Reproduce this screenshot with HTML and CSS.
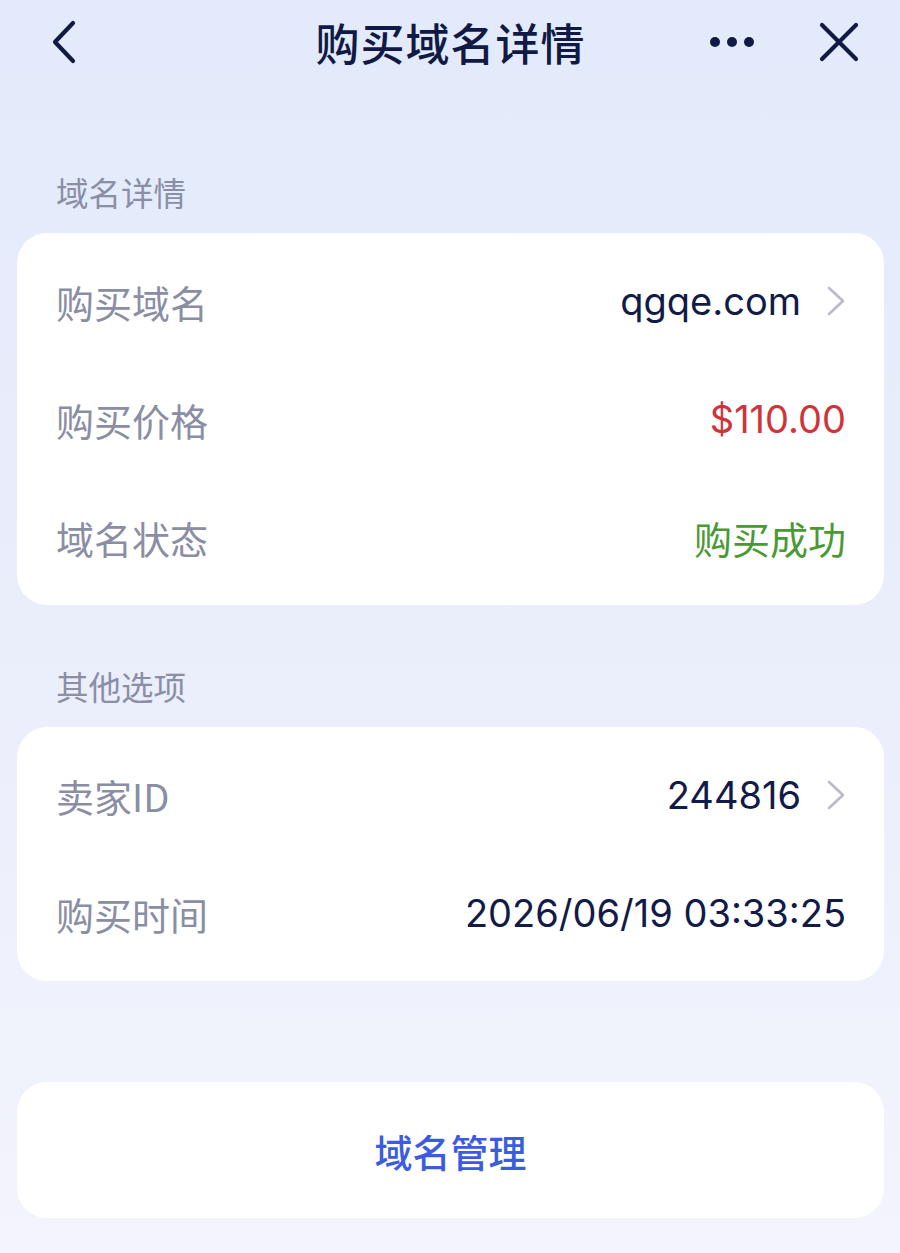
FILE: index.html
```html
<!DOCTYPE html>
<html lang="zh-CN">
<head>
    <meta charset="UTF-8">
    <meta name="viewport" content="width=device-width, initial-scale=1.0">
    <title>购买域名详情</title>
    <link rel="stylesheet" href="styles.css">
</head>
<body>

<div class="page">

    <div class="nav-bar">
        <span class="nav-btn back">
            <svg width="30" height="44" viewBox="0 0 30 44"><path d="M25 3 L7 22 L25 41" fill="none" stroke="#111a44" stroke-width="4.2" stroke-linecap="round" stroke-linejoin="round"/></svg>
        </span>
        <h1 class="nav-title">购买域名详情</h1>
        <div class="nav-actions">
            <span class="nav-btn more">
                <svg width="46" height="12" viewBox="0 0 46 12"><circle cx="6" cy="6" r="5" fill="#111a44"/><circle cx="23" cy="6" r="5" fill="#111a44"/><circle cx="40" cy="6" r="5" fill="#111a44"/></svg>
            </span>
            <span class="nav-btn close">
                <svg width="40" height="40" viewBox="0 0 40 40"><path d="M3 3 L37 37 M37 3 L3 37" fill="none" stroke="#111a44" stroke-width="4.2" stroke-linecap="round"/></svg>
            </span>
        </div>
    </div>

    <div class="section-title">域名详情</div>
    <div class="card">
        <div class="row">
            <span class="label">购买域名</span>
            <span class="value">qgqe.com
                <svg class="arrow" width="20" height="30" viewBox="0 0 20 30"><path d="M3 2 L17 15 L3 28" fill="none" stroke="#b9bcc8" stroke-width="2.6" stroke-linecap="round" stroke-linejoin="round"/></svg>
            </span>
        </div>
        <div class="row">
            <span class="label">购买价格</span>
            <span class="value price">$110.00</span>
        </div>
        <div class="row">
            <span class="label">域名状态</span>
            <span class="value status">购买成功</span>
        </div>
    </div>

    <div class="section-title">其他选项</div>
    <div class="card">
        <div class="row">
            <span class="label">卖家ID</span>
            <span class="value">244816
                <svg class="arrow" width="20" height="30" viewBox="0 0 20 30"><path d="M3 2 L17 15 L3 28" fill="none" stroke="#b9bcc8" stroke-width="2.6" stroke-linecap="round" stroke-linejoin="round"/></svg>
            </span>
        </div>
        <div class="row">
            <span class="label">购买时间</span>
            <span class="value">2026/06/19 03:33:25</span>
        </div>
    </div>

    <div class="action-card">域名管理</div>

</div>

</body>
</html>
```

FILE: styles.css
```css
html, body {
    margin: 0;
    padding: 0;
}

body {
    font-family: Inter, "Noto Sans CJK SC", sans-serif;
    background: linear-gradient(180deg, #e2eafb 0%, #eaeefb 50%, #f3f4fc 100%);
    min-height: 1253px;
    color: #111a44;
}

.page {
    padding: 0 16px 0 17px;
}

.nav-bar {
    height: 84px;
    display: flex;
    align-items: center;
    justify-content: space-between;
    position: relative;
}

.nav-btn {
    display: flex;
    align-items: center;
}

.back {
    margin-left: 31px;
}

.nav-title {
    position: absolute;
    left: 0;
    right: 0;
    top: 0;
    margin: 0;
    text-align: center;
    line-height: 84px;
    font-family: "Noto Sans CJK SC", sans-serif;
    font-size: 44px;
    font-weight: 500;
    letter-spacing: 1px;
    color: #111a44;
}

.nav-actions {
    display: flex;
    align-items: center;
    gap: 64px;
    margin-right: 25px;
    position: relative;
}

.section-title {
    font-family: "Noto Sans CJK SC", sans-serif;
    font-size: 32.5px;
    color: #8a8fa6;
    padding-left: 39px;
    line-height: 40px;
    margin-top: 88px;
    margin-bottom: 21px;
}

.card + .section-title {
    margin-top: 61px;
}

.card {
    background: #fff;
    border-radius: 30px;
    padding: 9px 38px 9px 39px;
}

.row {
    height: 118px;
    display: flex;
    align-items: center;
    justify-content: space-between;
}

.label {
    font-family: "Noto Sans CJK SC", sans-serif;
    font-size: 38px;
    color: #8a8ea5;
}

.value {
    display: flex;
    align-items: center;
    font-size: 38px;
    color: #121a48;
}

.arrow {
    margin-left: 25px;
}

.price {
    color: #d0343a;
}

.status {
    font-family: "Noto Sans CJK SC", sans-serif;
    font-size: 38px;
    color: #4a9a34;
}

.action-card {
    margin-top: 101px;
    height: 136px;
    background: #fff;
    border-radius: 30px;
    display: flex;
    align-items: center;
    justify-content: center;
    font-family: "Noto Sans CJK SC", sans-serif;
    font-size: 38px;
    font-weight: 500;
    color: #3b5ce0;
}
```
